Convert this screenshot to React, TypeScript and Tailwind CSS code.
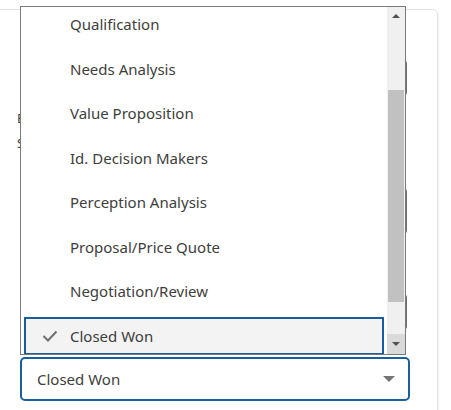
const stages = [
  'Qualification',
  'Needs Analysis',
  'Value Proposition',
  'Id. Decision Makers',
  'Perception Analysis',
  'Proposal/Price Quote',
  'Negotiation/Review',
  'Closed Won',
]

const selected = 'Closed Won'

function Check() {
  return (
    <svg width="16" height="12" viewBox="0 0 16 12" className="shrink-0">
      <path d="M1.5 6 L6 10.5 L14.5 1.5" fill="none" stroke="#6f6f6f" strokeWidth="2" />
    </svg>
  )
}

function Caret({ down, size = 8, color = '#505050' }: { down?: boolean; size?: number; color?: string }) {
  const h = size / 2
  return (
    <svg width={size} height={h} viewBox={`0 0 ${size} ${h}`}>
      <path d={down ? `M0 0 L${size} 0 L${h} ${h} Z` : `M0 ${h} L${size} ${h} L${h} 0 Z`} fill={color} />
    </svg>
  )
}

function ListBox() {
  return (
    <div className="absolute left-[20px] top-[6px] w-[386px] h-[349px] bg-white border border-[#7a7a7a] flex overflow-hidden">
      <div className="flex-1 overflow-hidden">
        <div className="-mt-[5px]">
          {stages.map((s) => (
            <div key={s} className="h-[44.57px] flex items-center px-[3px]">
              <div
                className={
                  'w-full h-[38px] flex items-center ' +
                  (s === selected ? 'bg-[#f3f3f3] border-2 border-[#1a5c9a]' : 'border-2 border-transparent')
                }
              >
                <div className="w-[44px] pl-[16px] flex items-center">{s === selected && <Check />}</div>
                <span>{s}</span>
              </div>
            </div>
          ))}
        </div>
      </div>
      {/* scrollbar */}
      <div className="w-[18px] bg-[#f0f0f0] flex flex-col">
        <div className="h-[18px] flex items-center justify-center">
          <Caret />
        </div>
        <div className="flex-1 flex flex-col pt-[65px] pb-[32px]">
          <div className="flex-1 bg-[#c1c1c1] mx-[1px]" />
        </div>
        <div className="h-[20px] bg-[#dadada] flex items-center justify-center">
          <Caret down />
        </div>
      </div>
    </div>
  )
}

export default function App() {
  return (
    <div
      className="relative w-[451px] h-[410px] overflow-hidden bg-white text-[15px] text-[#3e3e3c]"
      style={{ fontFamily: '"Noto Sans", "Open Sans", sans-serif' }}
    >
      {/* card behind the popup */}
      <div className="mt-[9px] -ml-[10px] w-[448px] h-[420px] border border-[#e2e2e2] rounded-tr-[5px] shadow-sm">
        <div className="pl-[16px] pr-[30px] pt-[50px] flex flex-col gap-[10px]">
          <div className="h-[36px] border-r-2 border-[#6f6f6f] rounded-r" />
          <div className="pl-[10px] text-[13px] leading-[25px] w-[14px] overflow-hidden whitespace-nowrap">
            <div>Expected Revenue</div>
            <div>Stage</div>
          </div>
          <div className="h-[12px]" />
          <div className="h-[46px] border-r-2 border-[#6f6f6f] rounded-r" />
          <div className="h-[40px]" />
          <div className="h-[36px] border-r-2 border-[#6f6f6f] rounded-r" />
        </div>
      </div>

      {/* combobox */}
      <div className="absolute left-[20px] top-[357px] w-[390px] h-[44px] border-2 border-[#1b5e9e] rounded-[5px] bg-white flex items-center justify-between pl-[15px] pr-[13px]">
        <span>Closed Won</span>
        <Caret down size={12} color="#747474" />
      </div>

      <ListBox />
    </div>
  )
}
